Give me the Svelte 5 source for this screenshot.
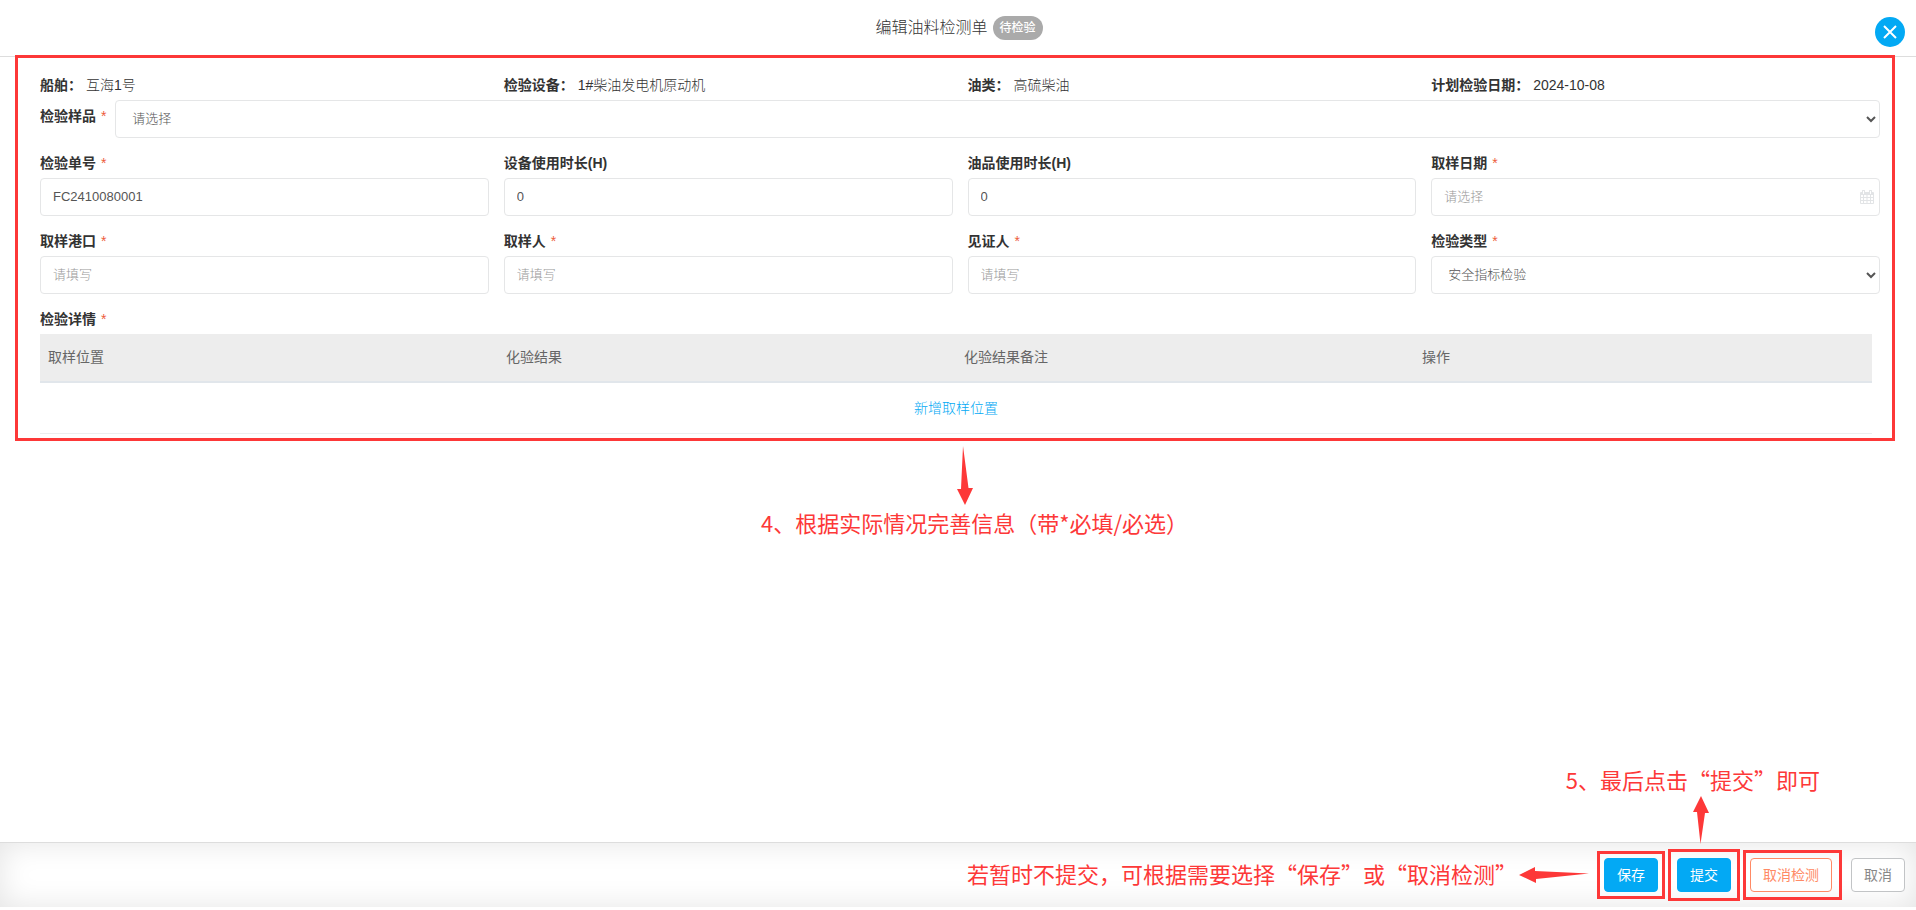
<script lang="ts">
	type Field = {
		id: string;
		label: string;
		required?: boolean;
		kind?: 'text' | 'date' | 'select';
		value?: string;
	};

	const info = [
		{ label: '船舶', value: '互海1号' },
		{ label: '检验设备', value: '1#柴油发电机原动机' },
		{ label: '油类', value: '高硫柴油' },
		{ label: '计划检验日期', value: '2024-10-08' },
	];

	let fields: Field[] = $state([
		{ id: 'orderNo', label: '检验单号', required: true, value: 'FC2410080001' },
		{ id: 'deviceHours', label: '设备使用时长(H)', value: '0' },
		{ id: 'oilHours', label: '油品使用时长(H)', value: '0' },
		{ id: 'sampleDate', label: '取样日期', required: true, kind: 'date', value: '' },
		{ id: 'samplePort', label: '取样港口', required: true, value: '' },
		{ id: 'sampler', label: '取样人', required: true, value: '' },
		{ id: 'witness', label: '见证人', required: true, value: '' },
		{ id: 'checkType', label: '检验类型', required: true, kind: 'select', value: '安全指标检验' },
	]);

	const columns = ['取样位置', '化验结果', '化验结果备注', '操作'];
</script>

{#snippet star()}
	<span class="star">*</span>
{/snippet}

<div class="page" lang="zh-CN">
	<header>
		<h1>编辑油料检测单</h1>
		<span class="badge">待检验</span>
		<button type="button" class="close" aria-label="关闭">
			<svg width="14" height="14" viewBox="0 0 14 14">
				<path d="M1 1L13 13M13 1L1 13" stroke="#fff" stroke-width="2" fill="none" />
			</svg>
		</button>
	</header>

	<main>
		<section class="panel">
			<div class="grid info">
				{#each info as item}
					<div><b>{item.label}：</b> <span>{item.value}</span></div>
				{/each}
			</div>

			<div class="sample">
				<label for="sample">检验样品 {@render star()}</label>
				<select id="sample">
					<option>请选择</option>
				</select>
			</div>

			<div class="grid fields">
				{#each fields as field (field.id)}
					<div class="field">
						<label for={field.id}>
							{field.label}
							{#if field.required}{@render star()}{/if}
						</label>
						{#if field.kind === 'select'}
							<select id={field.id} bind:value={field.value}>
								<option>安全指标检验</option>
							</select>
						{:else if field.kind === 'date'}
							<div class="date">
								<input id={field.id} type="text" placeholder="请选择" bind:value={field.value} />
								<svg width="14" height="14" viewBox="0 0 14 14" aria-hidden="true">
									<path
										fill-rule="evenodd"
										d="M1 2H2V1a1 1 0 0 1 3 0V2H9V1a1 1 0 0 1 3 0V2H13a1 1 0 0 1 1 1V13a1 1 0 0 1-1 1H1a1 1 0 0 1-1-1V3a1 1 0 0 1 1-1ZM3 1V4H4V1ZM10 1V4H11V1ZM1 5V7H3V5ZM4 5V7H6.500V5ZM7.500 5V7H10V5ZM11 5V7H13V5ZM1 8V10H3V8ZM4 8V10H6.500V8ZM7.500 8V10H10V8ZM11 8V10H13V8ZM1 11V13H3V11ZM4 11V13H6.500V11ZM7.500 11V13H10V11ZM11 11V13H13V11Z"
									/>
								</svg>
							</div>
						{:else}
							<input id={field.id} type="text" placeholder="请填写" bind:value={field.value} />
						{/if}
					</div>
				{/each}
			</div>

			<div class="field">
				<span class="title" id="detail">检验详情 {@render star()}</span>
				<table aria-labelledby="detail">
					<thead>
						<tr>
							{#each columns as column}
								<th>{column}</th>
							{/each}
						</tr>
					</thead>
					<tbody>
						<tr>
							<td colspan="4"><a href="#add">新增取样位置</a></td>
						</tr>
					</tbody>
				</table>
			</div>
		</section>

		<div class="step">
			<svg width="16" height="59" viewBox="0 0 16 59">
				<path d="M6 0L11.500 42L16 42L8 59L0 43H4Z" />
			</svg>
			<p class="note">4、根据实际情况完善信息（带*必填/必选）</p>
		</div>
	</main>

	<footer>
		<div class="hint">
			<p class="note">若暂时不提交，可根据需要选择“保存”或“取消检测”</p>
			<svg width="70" height="16" viewBox="0 0 70 16">
				<path d="M0 8L16 0V4L70 6.500L17 12V16Z" />
			</svg>
		</div>
		<div class="mark save">
			<button type="button" class="btn primary">保存</button>
		</div>
		<div class="mark submit">
			<button type="button" class="btn primary">提交</button>
			<div class="tip">
				<p class="note">5、最后点击“提交”即可</p>
				<svg width="16" height="48" viewBox="0 0 16 48">
					<path d="M8 0L16 17H12L7.500 48L4 16H0Z" />
				</svg>
			</div>
		</div>
		<div class="mark cancel">
			<button type="button" class="btn warn">取消检测</button>
		</div>
		<button type="button" class="btn">取消</button>
	</footer>
</div>

<style>
	:global(body) {
		margin: 0;
		background: #fff;
	}
	.page {
		display: flex;
		flex-direction: column;
		box-sizing: border-box;
		min-height: 100vh;
		padding-bottom: 3px;
		font: 14px/20px 'Liberation Sans', 'Noto Sans CJK SC', sans-serif;
		color: #333;
	}
	header {
		position: relative;
		display: flex;
		align-items: center;
		justify-content: center;
		gap: 5px;
		height: 56px;
		padding-left: 2px;
		border-bottom: 1px solid #ddd;
	}
	h1 {
		margin: 0;
		font-size: 16px;
		font-weight: 300;
	}
	.badge {
		padding: 2px 7px;
		border-radius: 12px;
		background: #aaa;
		color: #fff;
		font-size: 12px;
		font-weight: 500;
	}
	.close {
		position: absolute;
		top: 17px;
		right: 11px;
		display: flex;
		align-items: center;
		justify-content: center;
		width: 30px;
		height: 30px;
		padding: 0;
		border: none;
		border-radius: 50%;
		background: #03a9f4;
		cursor: pointer;
	}
	main {
		flex: 1;
	}
	.panel {
		position: relative;
		margin: -2px 21px 0 15px;
		padding: 17px 12px 4px 22px;
		border: 3px solid #fd3838;
	}
	.grid {
		display: grid;
		grid-template-columns: repeat(4, minmax(0, 1fr));
		gap: 15px;
	}
	.info {
		margin-bottom: 5px;
		font-weight: 300;
	}
	b,
	label,
	.title {
		font-weight: bold;
	}
	.star {
		margin-left: 1px;
		color: #ed5c3b;
		font-weight: normal;
	}
	.sample {
		display: flex;
		gap: 9px;
		margin-bottom: 15px;
		& label {
			flex: none;
			padding-top: 6px;
		}
	}
	.fields {
		margin-bottom: 15px;
	}
	.field {
		display: flex;
		flex-direction: column;
		gap: 5px;
	}
	input,
	select {
		box-sizing: border-box;
		width: 100%;
		height: 38px;
		padding: 5px 12px 7px;
		border: 1px solid #e5e6e7;
		border-radius: 4px;
		background: #fff;
		color: #555;
		font-family: inherit;
		font-size: 13px;
		font-weight: 300;
		outline: none;
	}
	input::placeholder {
		color: #999;
	}
	.date {
		position: relative;
		& svg {
			position: absolute;
			top: 12px;
			right: 6px;
			fill: #e2e4e6;
		}
	}
	table {
		width: calc(100% - 8px);
		border-collapse: separate;
		border-spacing: 0;
		table-layout: fixed;
	}
	th {
		height: 45px;
		padding: 0 8px 2px;
		border-bottom: 2px solid #e1e6eb;
		background: #ededed;
		color: #666;
		font-weight: normal;
		text-align: left;
	}
	td {
		height: 50px;
		padding: 0;
		border-bottom: 1px solid #eceeef;
		text-align: center;
	}
	a {
		color: #03a9f4;
		font-weight: 300;
		text-decoration: none;
	}
	svg {
		display: block;
		flex: none;
	}
	.note {
		margin: 0;
		padding-bottom: 4px;
		color: #fd3838;
		font: 22px/26px 'Noto Sans CJK SC', sans-serif;
		white-space: nowrap;
	}
	.step {
		width: max-content;
		margin: 5px 0 0 calc(50% - 197px);
		& svg {
			margin: 0 0 4px 196px;
		}
	}
	.step svg,
	.hint svg,
	.tip svg {
		fill: #fd3838;
	}
	footer {
		display: flex;
		align-items: center;
		justify-content: flex-end;
		gap: 19px;
		padding: 15px 11px 15px 15px;
		border-top: 1px solid #ddd;
		box-shadow: inset 0 0 30px #e4e4e4;
	}
	.hint {
		display: flex;
		align-items: center;
		gap: 2px;
		margin-right: -4px;
	}
	.btn {
		display: block;
		height: 34px;
		padding: 0 12px;
		border: 1px solid #c2c4c6;
		border-radius: 4px;
		background: #fff;
		color: #888;
		font: inherit;
		cursor: pointer;
	}
	.primary {
		border-color: #03a9f4;
		background: #03a9f4;
		color: #fff;
	}
	.warn {
		border-color: #ff8a65;
		color: #ff8a65;
	}
	.mark {
		position: relative;
		&::before {
			content: '';
			position: absolute;
			inset: -7px;
			border: 3px solid #fd3838;
			pointer-events: none;
		}
	}
	.submit::before {
		inset: -9px;
	}
	.cancel::before {
		inset: -8px -10px -8px -7px;
	}
	.tip {
		position: absolute;
		right: -89px;
		bottom: 48px;
		& svg {
			margin-left: 127px;
		}
	}
</style>
